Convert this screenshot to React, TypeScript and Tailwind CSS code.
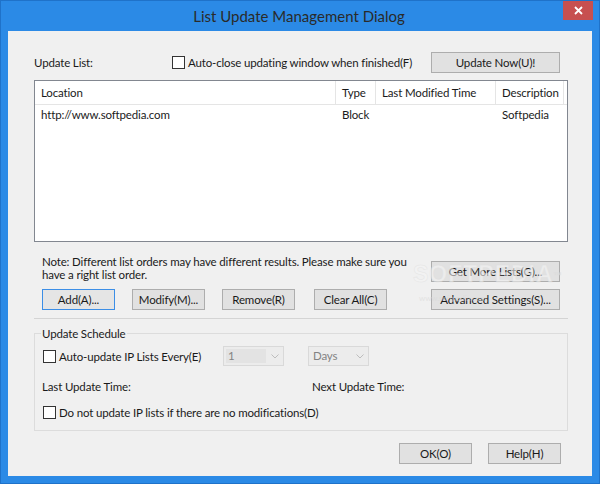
import React from "react"

const ui = { fontFamily: 'Lato, "Liberation Sans", sans-serif' }

function Button({ label, width = "w-[73px]", focused = false }: { label: string; width?: string; focused?: boolean }) {
  return (
    <button
      className={`${width} h-[21px] shrink-0 whitespace-nowrap border ${
        focused ? "border-[#3c8ee6] bg-[#e5e5e5]" : "border-[#adadad] bg-[#e1e1e1]"
      } text-[11.5px] tracking-[-0.15px] leading-none text-[#1a1a1a]`}
    >
      {label}
    </button>
  )
}

function Check({ label }: { label: string }) {
  return (
    <label className="flex items-center gap-[3px] whitespace-nowrap leading-[15px] text-[#1a1a1a]">
      <span className="w-[13px] h-[13px] shrink-0 border border-[#333333] bg-white" />
      <span>{label}</span>
    </label>
  )
}

function Combo({ value, field = false }: { value: string; field?: boolean }) {
  return (
    <div className="w-[61px] h-[20px] border border-[#d9d9d9] bg-[#ececec] flex items-center pl-[2px] pr-[4px]">
      <span
        className={`flex-1 h-[14px] flex items-center pl-[2px] text-[#838383] ${
          field ? "bg-[#e3e3e3] mr-[5px]" : ""
        }`}
      >
        {value}
      </span>
      <svg width="8" height="5" viewBox="0 0 8 5" className="shrink-0">
        <polyline points="0.5,0.5 4,4 7.5,0.5" fill="none" stroke="#bdbdbd" strokeWidth="1" />
      </svg>
    </div>
  )
}

const columns = [
  { title: "Location", width: "w-[301px]" },
  { title: "Type", width: "w-[40px]" },
  { title: "Last Modified Time", width: "w-[120px]" },
  { title: "Description", width: "w-[68px]" },
]

export default function App() {
  return (
    <div className="w-[600px] h-[484px] border border-[#1f72c9] bg-[#2b8ae6] flex flex-col" style={ui}>
      {/* title bar */}
      <div className="h-[30px] flex items-start shrink-0">
        <div className="w-[30px]" />
        <div className="flex-1 h-[30px] flex items-center justify-center text-[15px] text-[#2a2a2a] pl-[4px]">
          List Update Management Dialog
        </div>
        <div className="w-[30px] h-[19px] bg-[#c75050] flex items-center justify-center mr-[6px]">
          <svg width="9" height="9" viewBox="0 0 9 9">
            <path d="M1 1 L8 8 M8 1 L1 8" stroke="white" strokeWidth="1.8" />
          </svg>
        </div>
      </div>

      {/* client area */}
      <div className="relative mx-[7px] w-[584px] h-[445px] bg-[#f0f0f0] flex flex-col pl-[26px] pr-[24px] text-[11.5px] tracking-[-0.15px] text-[#1a1a1a] whitespace-nowrap">
        <div className="mt-[21px] h-[21px] flex items-center">
          <span className="w-[138px]">Update List:</span>
          <Check label="Auto-close updating window when finished(F)" />
          <div className="ml-auto mr-[8px]">
            <Button label="Update Now(U)!" width="w-[129px]" />
          </div>
        </div>

        {/* list view */}
        <div className="mt-[7px] h-[162px] border border-[#828790] bg-white">
          <div className="flex h-[24px] border-b border-[#e5e5e5]">
            {columns.map((c) => (
              <div key={c.title} className={`${c.width} h-full flex items-center pl-[6px] border-r border-[#e5e5e5]`}>
                {c.title}
              </div>
            ))}
          </div>
          <div className="flex h-[20px] items-center">
            <div className="w-[301px] pl-[6px]">http://www.softpedia.com</div>
            <div className="w-[40px] pl-[6px]">Block</div>
            <div className="w-[120px]" />
            <div className="w-[68px] pl-[6px]">Softpedia</div>
          </div>
        </div>

        {/* note and action buttons */}
        <div className="mt-[13px] px-[8px] flex">
          <div className="flex flex-col">
            <p className="leading-[13px] h-[26px]">
              Note: Different list orders may have different results. Please make sure you
              <br />
              have a right list order.
            </p>
            <div className="mt-[8px] flex gap-[17px]">
              <Button label="Add(A)..." focused />
              <Button label="Modify(M)..." />
              <Button label="Remove(R)" />
              <div className="ml-[2px]">
                <Button label="Clear All(C)" />
              </div>
            </div>
          </div>
          <div className="ml-auto flex flex-col mt-[6px] gap-[7px]">
            <Button label="Get More Lists(G)..." width="w-[129px]" />
            <Button label="Advanced Settings(S)..." width="w-[129px]" />
          </div>
        </div>

        <div className="mt-[8px] h-px bg-[#d4d4d4]" />

        {/* schedule group */}
        <fieldset className="mt-[7px] border border-[#dcdcdc] pl-[8px] pb-[10px]">
          <legend className="-ml-[2px] px-[1px] leading-[15px]">Update Schedule</legend>
          <div className="mt-[5px] h-[20px] flex items-center">
            <div className="w-[180px]">
              <Check label="Auto-update IP Lists Every(E)" />
            </div>
            <Combo value="1" field />
            <div className="ml-[24px]">
              <Combo value="Days" />
            </div>
          </div>
          <div className="mt-[13px] flex leading-[15px] -ml-px">
            <span className="w-[270px]">Last Update Time:</span>
            <span>Next Update Time:</span>
          </div>
          <div className="mt-[11px]">
            <Check label="Do not update IP lists if there are no modifications(D)" />
          </div>
        </fieldset>

        <div className="mt-[12px] flex justify-end gap-[16px] mr-[7px]">
          <Button label="OK(O)" />
          <Button label="Help(H)" />
        </div>

        {/* watermark */}
        <div className="pointer-events-none absolute left-[405px] top-[231px] flex flex-col items-start opacity-60">
          <span
            className="text-[23px] leading-[24px] font-bold tracking-[1px] text-[#f4f4f4] [-webkit-text-stroke:0.5px_#dedede]"
            style={{ fontFamily: '"Liberation Sans", sans-serif' }}
          >
            SOFTPEDIA<sup className="text-[8px] text-[#d4d4d4]">™</sup>
          </span>
          <span className="text-[8px] text-[#dadada] ml-[6px] mt-[6px]">www.softpedia.com</span>
        </div>
      </div>
    </div>
  )
}
